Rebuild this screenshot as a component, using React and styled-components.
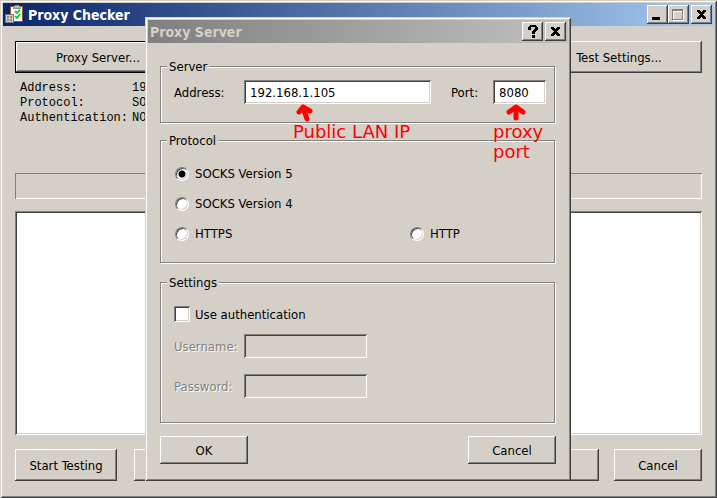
import React, { useState } from "react";
import styled, { createGlobalStyle, css } from "styled-components";

const face = "#d4d0c8";
const grey = "#808080";
const dark = "#404040";

const GlobalStyle = createGlobalStyle`
  *, *::before, *::after { box-sizing: border-box; }
  body {
    margin: 0;
    background: ${face};
    color: #000;
    font: 13px/15px "DejaVu Sans Condensed", "DejaVu Sans", sans-serif;
  }
  button, input { font: inherit; color: inherit; }
`;

const raised = css`
  box-shadow: inset -1px -1px ${dark}, inset 1px 1px #fff, inset -2px -2px ${grey};
`;
const sunken = css`
  box-shadow: inset 1px 1px ${grey}, inset -1px -1px #fff, inset 2px 2px ${dark}, inset -2px -2px ${face};
`;
const frame = css`
  background: ${face};
  box-shadow: inset 1px 1px ${face}, inset -1px -1px ${dark}, inset 2px 2px #fff, inset -2px -2px ${grey};
  padding: 3px;
`;

const Desktop = styled.main`
  position: relative;
  min-height: 100vh;
  display: flex;
`;
const AppWindow = styled.section`
  ${frame}
  flex: 1;
  display: flex;
  flex-direction: column;
`;
const TitleBar = styled.header`
  display: flex;
  align-items: center;
  height: 23px;
  padding: 0 2px;
  color: ${(p) => (p.$active ? "#fff" : face)};
  background: ${(p) =>
    p.$active
      ? "linear-gradient(90deg, #0a246a, #a6caf0)"
      : `linear-gradient(90deg, ${grey}, #c0c0c0)`};
`;
const Title = styled.h1`
  flex: 1;
  margin: 0;
  font-size: 14px;
  line-height: 20px;
  font-weight: bold;
`;
const AppIcon = styled.svg`
  width: 20px;
  height: 20px;
  margin-right: 3px;
`;
const Caption = styled.button`
  ${raised}
  display: grid;
  place-items: center;
  width: 21px;
  height: 19px;
  padding: 0;
  border: 0;
  background: ${face};
  margin-left: ${(p) => (p.$spaced ? "2px" : "0")};
`;
const Body = styled.div`
  flex: 1;
  display: flex;
  flex-direction: column;
  padding: 15px 12px 14px;
`;
const Row = styled.div`
  display: flex;
  align-items: center;
  justify-content: space-between;
`;
const Button = styled.button`
  ${raised}
  width: ${(p) => p.$width}px;
  height: ${(p) => (p.$short ? 28 : 32)}px;
  padding: 0;
  border: ${(p) => (p.$default ? "1px solid #000" : "0")};
  background: ${face};
`;
const Backplate = styled.div`
  ${raised}
  flex: 1;
  height: 32px;
  margin: 0 15px 0 17px;
`;
const Summary = styled.dl`
  display: grid;
  grid-template-columns: 112px 1fr;
  margin: 8px 5px 0;
  font-family: "Liberation Mono", monospace;
  font-size: 12px;
  height: 92px;
  align-content: start;
  dd { margin: 0; }
`;
const Status = styled.div`
  height: 26px;
  box-shadow: inset 1px 1px ${grey}, inset -1px -1px #fff;
`;
const Results = styled.div`
  ${sunken}
  flex: 1;
  min-height: 120px;
  margin: 12px 0 14px;
  background: #fff;
`;

const Dialog = styled.form`
  ${frame}
  position: absolute;
  left: 145px;
  top: 17px;
  width: 426px;
`;
const DialogBody = styled.div`
  padding: 16px 12px 14px;
`;
const Group = styled.fieldset`
  min-width: 0;
  margin: 0 1px ${(p) => p.$after}px 0;
  padding: ${(p) => p.$pad};
  border: 1px solid ${grey};
  box-shadow: 1px 1px #fff, inset 1px 1px #fff;
`;
const Legend = styled.legend`
  margin-left: -7px;
  padding: 0 2px;
  line-height: 15px;
  background: ${face};
`;
const Field = styled.div`
  position: relative;
  display: grid;
  grid-template-columns: ${(p) => p.$label}px ${(p) => p.$input};
  align-items: center;
  flex: ${(p) => (p.$grow ? 1 : "none")};
  margin-bottom: ${(p) => p.$after || 0}px;
  color: ${(p) => (p.$off ? grey : "#000")};
  text-shadow: ${(p) => (p.$off ? "1px 1px #fff" : "none")};
`;
const TextBox = styled.input`
  ${sunken}
  width: 100%;
  min-width: 0;
  height: 24px;
  padding: 0 6px;
  border: 0;
  border-radius: 0;
  background: #fff;
  &:disabled { background: ${face}; }
`;
const ServerRow = styled.div`
  display: flex;
  gap: 20px;
`;
const Options = styled.div`
  display: grid;
  grid-template-columns: 235px 1fr;
  row-gap: 15px;
`;
const Choice = styled.label`
  display: flex;
  align-items: center;
  gap: ${(p) => p.$gap}px;
  height: ${(p) => p.$height}px;
  margin-bottom: ${(p) => p.$after || 0}px;
  grid-column-start: ${(p) => p.$col || "auto"};
`;
const Radio = styled.input`
  appearance: none;
  width: 14px;
  height: 14px;
  margin: 0 0 0 1px;
  border: 1px solid;
  border-color: ${grey} #fff #fff ${grey};
  border-radius: 50%;
  background: #fff;
  box-shadow: inset 1px 1px ${dark}, inset -1px -1px ${face};
  &:checked {
    background: radial-gradient(circle, #000 0 3px, #fff 4px);
  }
`;
const CheckBox = styled.input`
  ${sunken}
  appearance: none;
  width: 16px;
  height: 16px;
  margin: 0;
  background: #fff;
  &:checked { background: #fff radial-gradient(circle, #000 0 3px, #fff 4px); }
`;

const Note = styled.div`
  position: absolute;
  top: 22px;
  left: ${(p) => p.$left}px;
  z-index: 1;
  color: #f00;
  font: 18px/20px "DejaVu Sans", sans-serif;
  pointer-events: none;
  svg { display: block; margin-left: ${(p) => p.$arrow}px; }
`;
const NoteText = styled.p`
  margin: 0;
  width: ${(p) => p.$width}px;
`;

const Cross = () => (
  <svg width="9" height="9" viewBox="0 0 9 9" shapeRendering="crispEdges">
    <path d="M0 0h3v1H0zM6 0h3v1H6zM0 1h4v1H0zM5 1h4v1H5zM1 2h7v1H1zM2 3h5v1H2zM3 4h3v1H3zM2 5h5v1H2zM1 6h7v1H1zM0 7h4v1H0zM5 7h4v1H5zM0 8h3v1H0zM6 8h3v1H6z" />
  </svg>
);
const Minimize = () => (
  <svg width="11" height="11" viewBox="0 0 11 11" shapeRendering="crispEdges">
    <path d="M0 8h8v3H0z" />
  </svg>
);
const Maximize = () => (
  <svg width="13" height="13" viewBox="0 0 13 13" shapeRendering="crispEdges">
    <path d="M1.5 2.5h10v10h-10z M1 3.5h11" fill="none" stroke="#fff" />
    <path d="M.5 1.5h10v10H.5z M0 2.5h11" fill="none" stroke="#808080" />
  </svg>
);
const Help = () => (
  <svg width="10" height="13" viewBox="0 0 10 13" shapeRendering="crispEdges">
    <path d="M2 0h6v1h1v1h1v3H9v1H8v1H7v2H4V6h1V5h1V4h1V2H3v3H0V2h1V1h1zM4 10h3v3H4z" />
  </svg>
);
const ClipboardIcon = () => (
  <AppIcon viewBox="0 0 20 20" aria-hidden="true">
    <path d="M5 1h13v16H5z" fill="#8a5a20" />
    <path d="M6 2h11v14H6z" fill="#fff" />
    <path d="M8 1h2V0h4v1h2v3H8z" fill="#8c8c94" />
    <path d="M9 1h6v2H9z" fill="#b8b8bc" />
    <path d="M10 6l2 2 3-3M10 11l2 2 3-4" fill="none" stroke="#20c838" strokeWidth="2" />
    <path d="M0 9h9v9H0z" fill="#777" />
    <path d="M1 10h7v7H1z" fill="#d0d0d0" />
    <path d="M2 11h2v2H2z" fill="#888" />
    <path d="M5 11h2v2H5z" fill="#d06060" />
    <path d="M2 14h2v2H2z" fill="#60a060" />
    <path d="M5 14h2v2H5z" fill="#888" />
  </AppIcon>
);

export default function App() {
  const [protocol, setProtocol] = useState("SOCKS Version 5");
  const [auth, setAuth] = useState(false);
  const option = (name, col) => (
    <Choice $height={15} $gap={6} $col={col}>
      <Radio
        type="radio"
        name="protocol"
        checked={protocol === name}
        onChange={() => setProtocol(name)}
      />
      {name}
    </Choice>
  );

  return (
    <Desktop>
      <GlobalStyle />
      <AppWindow>
        <TitleBar $active>
          <ClipboardIcon />
          <Title>Proxy Checker</Title>
          <Caption aria-label="Minimize"><Minimize /></Caption>
          <Caption aria-label="Maximize" disabled><Maximize /></Caption>
          <Caption aria-label="Close" $spaced><Cross /></Caption>
        </TitleBar>
        <Body>
          <Row>
            <Button $width={166} $default>Proxy Server...</Button>
            <Button $width={166}>Test Settings...</Button>
          </Row>
          <Summary>
            <dt>Address:</dt><dd>19</dd>
            <dt>Protocol:</dt><dd>SO</dd>
            <dt>Authentication:</dt><dd>NO</dd>
          </Summary>
          <Status />
          <Results />
          <Row>
            <Button $width={102}>Start Testing</Button>
            <Backplate />
            <Button $width={88}>Cancel</Button>
          </Row>
        </Body>
      </AppWindow>

      <Dialog onSubmit={(e) => e.preventDefault()}>
        <TitleBar>
          <Title as="h2">Proxy Server</Title>
          <Caption type="button" aria-label="Help"><Help /></Caption>
          <Caption type="button" aria-label="Close" $spaced><Cross /></Caption>
        </TitleBar>
        <DialogBody>
          <Group $after={10} $pad="6px 8px 18px 13px">
            <Legend>Server</Legend>
            <ServerRow>
              <Field $label={70} $input="1fr" $grow>
                <label htmlFor="address">Address:</label>
                <TextBox id="address" defaultValue="192.168.1.105" />
                <Note $left={119} $arrow={2}>
                  <svg width="20" height="20" viewBox="0 0 20 20" fill="none" stroke="#f00" strokeWidth="5" strokeLinecap="round" strokeLinejoin="round">
                    <path d="M12 17L8 5M4 10L8 5l7 4" />
                  </svg>
                  <NoteText $width={130}>Public LAN IP</NoteText>
                </Note>
              </Field>
              <Field $label={42} $input="53px">
                <label htmlFor="port">Port:</label>
                <TextBox id="port" defaultValue="8080" />
                <Note $left={42} $arrow={13}>
                  <svg width="20" height="20" viewBox="0 0 20 20" fill="none" stroke="#f00" strokeWidth="5" strokeLinecap="round" strokeLinejoin="round">
                    <path d="M10 16V5M3 10l7-5 7 5" />
                  </svg>
                  <NoteText $width={54}>proxy port</NoteText>
                </Note>
              </Field>
            </ServerRow>
          </Group>
          <Group $after={12} $pad="18px 13px 21px">
            <Legend>Protocol</Legend>
            <Options>
              {option("SOCKS Version 5", 1)}
              {option("SOCKS Version 4", 1)}
              {option("HTTPS", 1)}
              {option("HTTP", 2)}
            </Options>
          </Group>
          <Group $after={13} $pad="16px 13px 24px">
            <Legend>Settings</Legend>
            <Choice $height={16} $gap={5} $after={12}>
              <CheckBox type="checkbox" checked={auth} onChange={() => setAuth(!auth)} />
              Use authentication
            </Choice>
            <Field $label={70} $input="123px" $off={!auth} $after={16}>
              <label htmlFor="username">Username:</label>
              <TextBox id="username" disabled={!auth} />
            </Field>
            <Field $label={70} $input="123px" $off={!auth}>
              <label htmlFor="password">Password:</label>
              <TextBox id="password" type="password" disabled={!auth} />
            </Field>
          </Group>
          <Row>
            <Button type="submit" $width={88} $short>OK</Button>
            <Button type="button" $width={88} $short>Cancel</Button>
          </Row>
        </DialogBody>
      </Dialog>
    </Desktop>
  );
}
